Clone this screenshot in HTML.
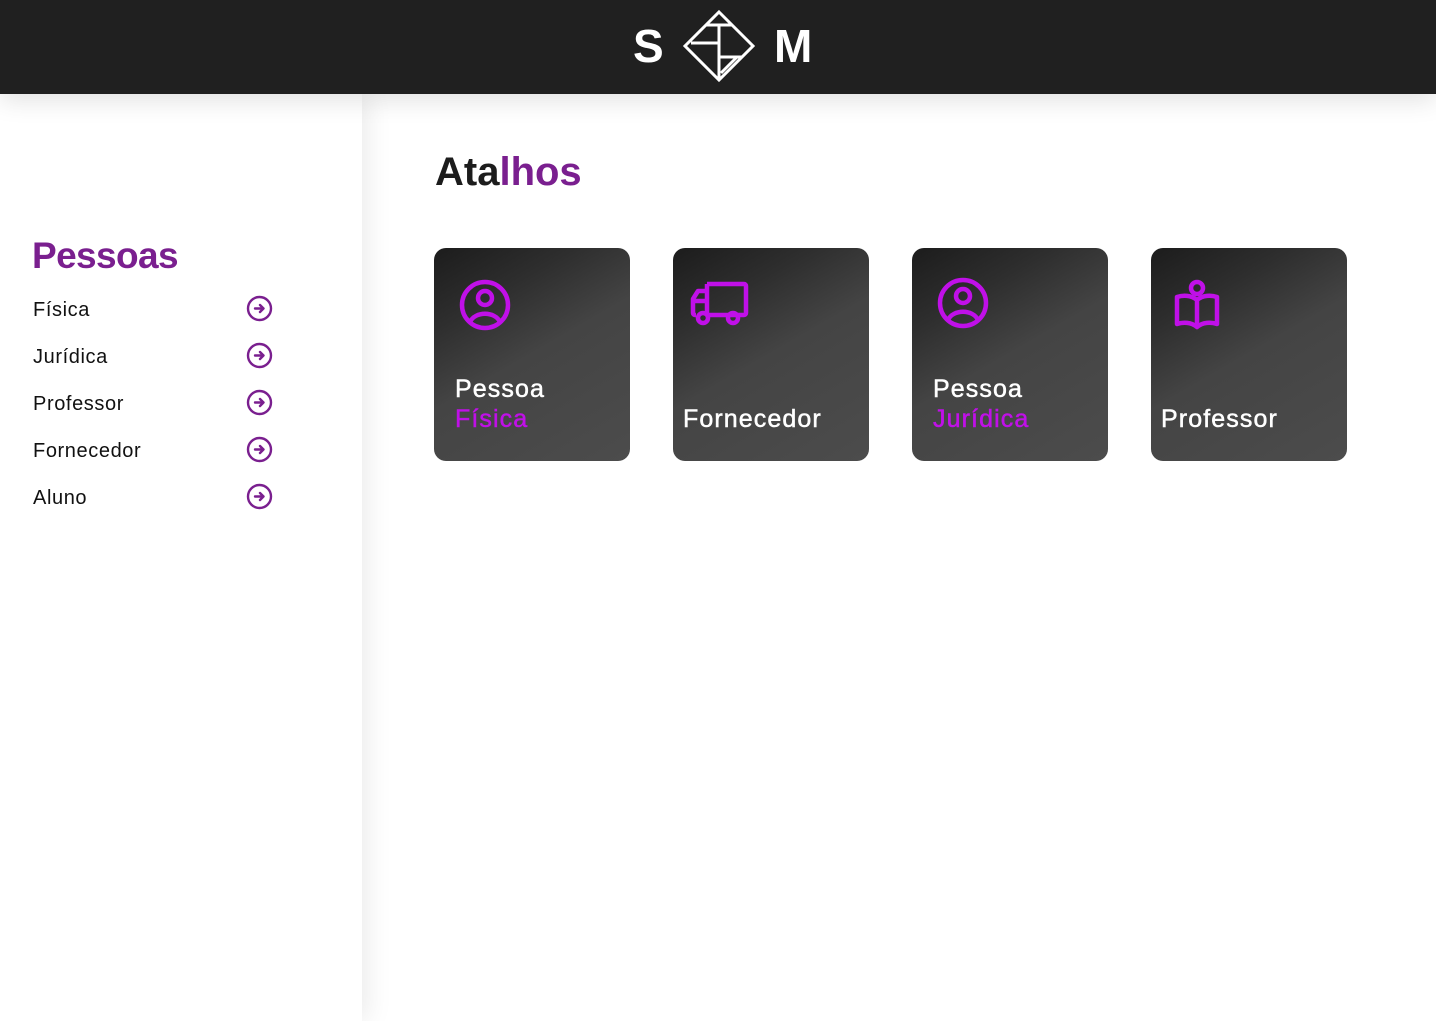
<!DOCTYPE html>
<html><head><meta charset="utf-8"><style>
*{margin:0;padding:0;box-sizing:border-box}
body{width:1436px;height:1021px;overflow:hidden;background:#fff;font-family:"Liberation Sans",sans-serif;position:relative}
.hdr{position:absolute;left:0;top:0;width:1436px;height:94px;background:#202020;z-index:3;box-shadow:0 6px 24px rgba(0,0,0,.12)}
.hdr .s,.hdr .m{position:absolute;top:20px;color:#fff;font-weight:bold;font-size:46px;line-height:52px}
.side{position:absolute;left:0;top:94px;width:362px;height:927px;background:#fff;box-shadow:6px 0 24px rgba(0,0,0,.08);z-index:2}
.side h2{position:absolute;left:32px;top:140px;font-size:37px;color:#7a1f8f;font-weight:bold;line-height:44px;letter-spacing:-0.6px}
.item{position:absolute;left:33px;font-size:20px;color:#111;line-height:24px;letter-spacing:0.6px}
.arr{position:absolute;left:246px;width:27px;height:27px}
h1{position:absolute;left:435px;top:148px;font-size:40px;line-height:48px;font-weight:bold;color:#1c1c1c}
h1 span{color:#7a1f8f}
.card{position:absolute;top:248px;width:196px;height:213px;border-radius:12px;background:linear-gradient(150deg,#1c1c1c 0%,#2e2e2e 25%,#444 50%,#4c4c4c 100%)}
.card svg{position:absolute}
.card .t{position:absolute;left:21px;bottom:27px;color:#fff;font-size:25px;line-height:30px;-webkit-text-stroke:0.5px currentColor;letter-spacing:1.1px}
.card .t b{color:#c010e8;font-weight:normal}
.card .t.n{left:10px}
</style></head><body>
<div class="hdr">
<div class="s" style="left:633px">S</div>
<svg style="position:absolute;left:680px;top:8px" width="78" height="76" viewBox="680 8 78 76" fill="none" stroke="#fff" stroke-width="3">
<path d="M719 12 L753 46 L719 80 L685 46 Z"/>
<path d="M706 25 H732 M719 25 V80 M691 43 H719 M719 57 H742 M737 57 L721 73"/>
</svg>
<div class="m" style="left:774px">M</div>
</div>
<div class="side">
<h2>Pessoas</h2>
<div class="item" style="top:204px">Física</div>
<div class="item" style="top:251px">Jurídica</div>
<div class="item" style="top:298px">Professor</div>
<div class="item" style="top:345px">Fornecedor</div>
<div class="item" style="top:392px">Aluno</div>
<svg class="arr" style="top:201px" viewBox="0 0 27 27" fill="none" stroke="#7a1f8f" stroke-width="2.4" stroke-linecap="round" stroke-linejoin="round"><circle cx="13.5" cy="13.5" r="11.5"/><path d="M9 13.5H17.5M14 10L17.5 13.5L14 17"/></svg>
<svg class="arr" style="top:248px" viewBox="0 0 27 27" fill="none" stroke="#7a1f8f" stroke-width="2.4" stroke-linecap="round" stroke-linejoin="round"><circle cx="13.5" cy="13.5" r="11.5"/><path d="M9 13.5H17.5M14 10L17.5 13.5L14 17"/></svg>
<svg class="arr" style="top:295px" viewBox="0 0 27 27" fill="none" stroke="#7a1f8f" stroke-width="2.4" stroke-linecap="round" stroke-linejoin="round"><circle cx="13.5" cy="13.5" r="11.5"/><path d="M9 13.5H17.5M14 10L17.5 13.5L14 17"/></svg>
<svg class="arr" style="top:342px" viewBox="0 0 27 27" fill="none" stroke="#7a1f8f" stroke-width="2.4" stroke-linecap="round" stroke-linejoin="round"><circle cx="13.5" cy="13.5" r="11.5"/><path d="M9 13.5H17.5M14 10L17.5 13.5L14 17"/></svg>
<svg class="arr" style="top:389px" viewBox="0 0 27 27" fill="none" stroke="#7a1f8f" stroke-width="2.4" stroke-linecap="round" stroke-linejoin="round"><circle cx="13.5" cy="13.5" r="11.5"/><path d="M9 13.5H17.5M14 10L17.5 13.5L14 17"/></svg>
</div>
<h1>Ata<span>lhos</span></h1>

<div class="card" style="left:434px">
<svg style="left:25px;top:31px" width="52" height="52" viewBox="0 0 52 52" fill="none" stroke="#c010e8" stroke-width="4.5"><circle cx="26" cy="26" r="23"/><circle cx="26" cy="19" r="7"/><path d="M11 43 C16 32 36 32 41 43"/></svg>
<div class="t">Pessoa<br><b>Física</b></div></div>

<div class="card" style="left:673px">
<svg style="left:17px;top:33px" width="60" height="45" viewBox="0 0 60 45" fill="none" stroke="#c010e8" stroke-width="4.5" stroke-linejoin="round"><path d="M17 3 H54 a2 2 0 0 1 2 2 V32 a2 2 0 0 1 -2 2 H18 M17 3 V34 M17 10 H8 L3 18 V32 a2 2 0 0 0 2 2 H6"/><path d="M3 20 H17"/><circle cx="13" cy="37" r="5"/><circle cx="43" cy="37" r="5"/></svg>
<div class="t n">Fornecedor</div></div>

<div class="card" style="left:912px">
<svg style="left:25px;top:29px" width="52" height="52" viewBox="0 0 52 52" fill="none" stroke="#c010e8" stroke-width="4.5"><circle cx="26" cy="26" r="23"/><circle cx="26" cy="19" r="7"/><path d="M11 43 C16 32 36 32 41 43"/></svg>
<div class="t">Pessoa<br><b>Jurídica</b></div></div>

<div class="card" style="left:1151px">
<svg style="left:22px;top:30px" width="48" height="54" viewBox="0 0 48 54" fill="none" stroke="#c010e8" stroke-width="4.5" stroke-linejoin="round"><circle cx="24" cy="10" r="6"/><path d="M24 22 C18 17 10 17 4 19 V46 C10 44 18 44 24 49 C30 44 38 44 44 46 V19 C38 17 30 17 24 22 Z M24 22 V49"/></svg>
<div class="t n">Professor</div></div>
</body></html>
